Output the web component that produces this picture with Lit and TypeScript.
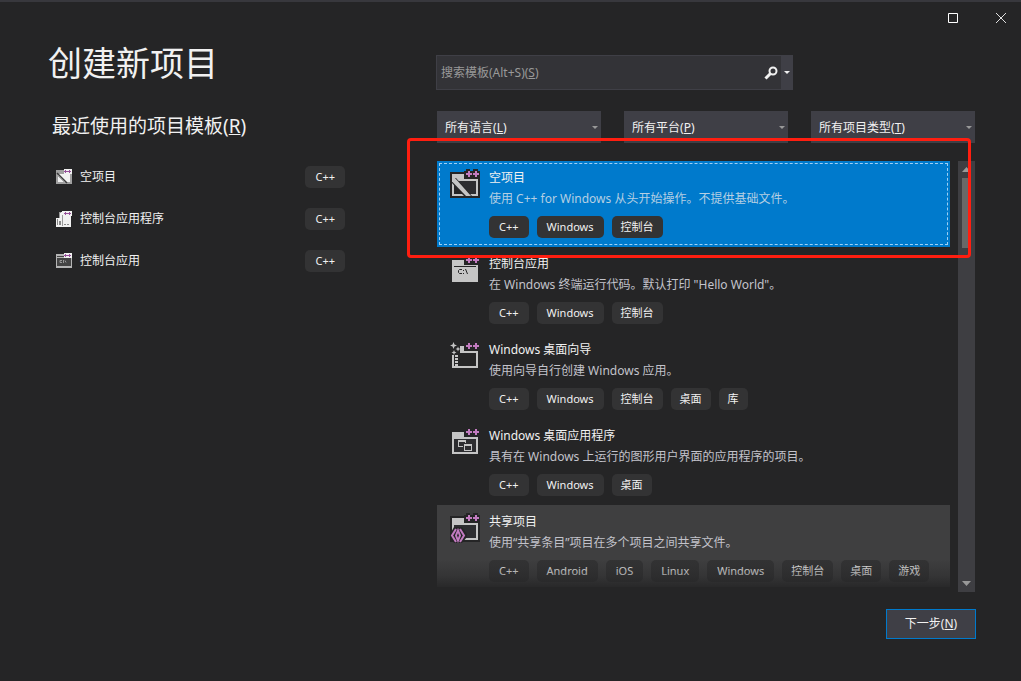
import { LitElement, html, css, svg, nothing } from "lit";
import { customElement, property } from "lit/decorators.js";
import { classMap } from "lit/directives/class-map.js";

interface Template {
  icon: string;
  title: string;
  text: string;
  tags: string[];
  state?: "selected" | "hover";
}

const RECENT = [
  { icon: "empty", title: "空项目", tag: "C++" },
  { icon: "program", title: "控制台应用程序", tag: "C++" },
  { icon: "console", title: "控制台应用", tag: "C++" },
];

const FILTERS = [
  { id: "language", label: "所有语言", key: "L", options: ["C++", "C#"] },
  { id: "platform", label: "所有平台", key: "P", options: ["Windows", "Linux", "Android", "iOS"] },
  { id: "type", label: "所有项目类型", key: "T", options: ["控制台", "桌面", "库", "游戏"] },
];

const TEMPLATES: Template[] = [
  {
    icon: "empty",
    title: "空项目",
    text: "使用 C++ for Windows 从头开始操作。不提供基础文件。",
    tags: ["C++", "Windows", "控制台"],
    state: "selected",
  },
  {
    icon: "console",
    title: "控制台应用",
    text: '在 Windows 终端运行代码。默认打印 "Hello World"。',
    tags: ["C++", "Windows", "控制台"],
  },
  {
    icon: "wizard",
    title: "Windows 桌面向导",
    text: "使用向导自行创建 Windows 应用。",
    tags: ["C++", "Windows", "控制台", "桌面", "库"],
  },
  {
    icon: "desktop",
    title: "Windows 桌面应用程序",
    text: "具有在 Windows 上运行的图形用户界面的应用程序的项目。",
    tags: ["C++", "Windows", "桌面"],
  },
  {
    icon: "shared",
    title: "共享项目",
    text: "使用“共享条目”项目在多个项目之间共享文件。",
    tags: ["C++", "Android", "iOS", "Linux", "Windows", "控制台", "桌面", "游戏"],
    state: "hover",
  },
];

const plusPlus = svg`
  <path fill="#252526" d="M17 2h4v2h3v-2h5v2h2v8H15v-8h2z"/>
  <path fill="#c27bc0" d="M19 4h2v2h2v2h-2v2h-2v-2h-2v-2h2zM26 4h2v2h2v2h-2v2h-2v-2h-2v-2h2z"/>`;

const windowFrame = svg`
  <path fill="#252526" d="M1 5h30v26H1z"/>
  <path fill="#c5c5c5" d="M3 7h13v4h13v18H3z"/>
  <path fill="#2d2d30" d="M5 14h22v13H5z"/>`;

const LARGE: Record<string, unknown> = {
  empty: svg`${windowFrame}
    <path fill="#252526" d="M3 11h4l16 18H3z"/>
    <path fill="#c5c5c5" d="M3 12v-1h3l16 18h-5L3 14.500z"/>
    <path fill="#c5c5c5" d="M3 16l2 2.200V27h8l2 2H3z"/>
    ${plusPlus}`,
  console: svg`
    <path fill="#252526" d="M1 5h30v26H1z"/>
    <path fill="#c5c5c5" d="M3 7h13v4h13v18H3z"/>
    <path fill="#252526" d="M5 13h22v1H5z"/>
    <path fill="none" stroke="#252526" d="M13 16.500h-2.500l-1 1v2l1 1H13M14.500 17v1M14.500 20v1M16.500 16l2 5"/>
    ${plusPlus}`,
  wizard: svg`
    <path fill="#c5c5c5" d="M11 7h5v4h1v1h12v17H3v-2h24V14H11z"/>
    <path fill="#c5c5c5" d="M3 16h2v12H3zM6 16h3v2H6zM6 19h3v2H6zM6 22h3v2H6zM6 25h3v2H6z"/>
    <path fill="#c5c5c5" d="M4.500 3l1 2.500 2.500 1-2.500 1-1 2.500-1-2.500-2.500-1 2.500-1zM9 7.500l.7 1.800 1.800.7-1.800.7L9 12.500l-.7-1.800-1.800-.7 1.800-.7zM5 11l.7 1.800 1.800.7-1.800.7L5 16l-.7-1.800-1.800-.7 1.800-.7z"/>
    ${plusPlus}`,
  desktop: svg`${windowFrame}
    <path fill="#c5c5c5" fill-rule="evenodd" d="M9 15h8v7H9zM10 17v4h6v-4z"/>
    <path fill="#2d2d30" d="M14 18h10v8H14z"/>
    <path fill="#c5c5c5" fill-rule="evenodd" d="M15 19h8v7h-8zM16 21v4h6v-4z"/>
    ${plusPlus}`,
  shared: svg`${windowFrame}
    <path fill="#252526" d="M5 16h8l5 7v3l-5 6H5l-4-6v-3z"/>
    <path fill="none" stroke="#c27bc0" stroke-width="2" d="M7 18l-4 6.500L7 31M11 18l4 6.500-4 6.500"/>
    <path fill="none" stroke="#c27bc0" stroke-width="2" d="M9 19.500l-2 5 2 5 2-5z"/>
    ${plusPlus}`,
};

const smallPlus = svg`
  <path fill="#f1f1f1" d="M8 0h8v5H8z"/>
  <path fill="#96509a" d="M9 1h1v1h1v1h-1v1H9v-1H8v-1h1zM13 1h1v1h1v1h-1v1h-1v-1h-1v-1h1z"/>
  <path fill="#96509a" d="M8 2h7v1H8z"/>`;

const SMALL: Record<string, unknown> = {
  empty: svg`
    <path fill="#a0a0a0" d="M0 1h16v14H0z"/>
    <path fill="#f1f1f1" d="M2 5h12v8H2z"/>
    <path stroke="#3a3a3a" stroke-width="1.500" d="M1 4l10 10"/>
    <path stroke="#a8a8a8" d="M1 6l8 8"/>${smallPlus}`,
  program: svg`
    <path fill="#f1f1f1" d="M6 0h9v16H0V7h3V1h3z"/>
    <path fill="#999" d="M3 1h2v1H4v5H3z"/>
    <path fill="#888" d="M1 8h1v6H1zM3 10h2v4H3zM8 13h2v1H8zM11 13h2v1h-2z"/>
    <path fill="#999" d="M6 4h1v11H6z"/>${smallPlus}`,
  console: svg`
    <path fill="#b4b4b4" d="M0 1h16v14H0z"/>
    <path fill="#444" d="M1 3h14v1H1zM1 5h14v8H1z"/>
    <path fill="none" stroke="#999" d="M6 7.500H4v2h2M7.500 7v3M9 7.500l1 2"/>${smallPlus}`,
};

@customElement("project-tag")
class ProjectTag extends LitElement {
  @property() name = "";

  static styles = css`
    :host {
      display: block;
      flex: none;
    }
    .tag {
      padding: 0 9px;
      border-radius: 5px;
      background: #333334;
      color: #f1f1f1;
      font-size: 11px;
      line-height: 22px;
      white-space: nowrap;
    }
    .latin {
      padding: 0 10px;
    }
  `;
  render() {
    const latin = /^[\x20-\x7e]+$/.test(this.name);
    return html`<div class=${classMap({ tag: true, latin })}>${this.name}</div>`;
  }
}

@customElement("template-item")
class TemplateItem extends LitElement {
  @property({ attribute: false }) item!: Template;

  static styles = css`
    :host {
      display: block;
      flex: none;
    }
    .item {
      display: grid;
      grid-template-columns: 32px minmax(0, 1fr);
      column-gap: 8px;
      padding: 6px 12px 9px;
    }
    .item.selected {
      background: #007acc;
      outline: 1px dashed #9fd0f5;
      outline-offset: -3px;
    }
    .item.selected .text {
      color: #b5cfe3;
    }
    .item.hover {
      background: #3f3f40;
    }
    .icon {
      width: 32px;
      height: 32px;
    }
    .title,
    .text {
      margin: 0;
      font-size: 12px;
      font-weight: 400;
      line-height: 21px;
      white-space: nowrap;
    }
    .title {
      color: #f1f1f1;
    }
    .text {
      color: #c3c3cb;
    }
    .tags {
      display: flex;
      flex-wrap: wrap;
      gap: 2px 8px;
      margin-top: 7px;
    }
  `;
  render() {
    const { icon, title, text, tags, state } = this.item;
    return html`
      <div class=${classMap({ item: true, selected: state === "selected", hover: state === "hover" })}>
        <svg class="icon" viewBox="0 0 32 32" aria-hidden="true">${LARGE[icon]}</svg>
        <div>
          <h3 class="title">${title}</h3>
          <p class="text">${text}</p>
          <div class="tags">${tags.map((t) => html`<project-tag .name=${t}></project-tag>`)}</div>
        </div>
      </div>
    `;
  }
}

@customElement("app-root")
class AppRoot extends LitElement {
  static styles = css`
    :host {
      display: flex;
      flex-direction: column;
      box-sizing: border-box;
      height: 100vh;
      border-top: 2px solid #38383d;
      background: #252526;
      color: #f1f1f1;
      font: 12px/20px "Noto Sans", "Noto Sans CJK SC", sans-serif;
    }
    button,
    input,
    select {
      margin: 0;
      padding: 0;
      border: 0;
      border-radius: 0;
      background: none;
      color: inherit;
      font: inherit;
      appearance: none;
    }
    svg {
      display: block;
    }
    u {
      text-underline-offset: 1px;
    }
    .titlebar {
      display: flex;
      justify-content: flex-end;
      flex: none;
      height: 32px;
      margin-bottom: 1px;
    }
    .control {
      display: grid;
      place-items: center;
      width: 48px;
      height: 32px;
    }
    .titlebar .control:last-child {
      margin-right: -4px;
    }
    .body {
      display: grid;
      grid-template-columns: 297px minmax(0, 1fr);
      column-gap: 91px;
      flex: 1;
      min-height: 0;
      padding: 0 45px 42px 48px;
    }
    h1 {
      margin: 6px 0 0;
      font-size: 34px;
      font-weight: 400;
      line-height: 44px;
    }
    h2 {
      margin: 27px 0 0 4px;
      font-size: 19px;
      font-weight: 400;
      line-height: 28px;
    }
    .recent {
      margin: 16px 0 0;
      padding: 0 0 0 8px;
      list-style: none;
    }
    .recent button {
      display: flex;
      align-items: center;
      gap: 8px;
      width: 100%;
      height: 42px;
      text-align: left;
    }
    .recent .name {
      flex: 1;
    }
    .right {
      display: flex;
      flex-direction: column;
      min-height: 0;
      padding-top: 20px;
    }
    .search {
      display: grid;
      grid-template-columns: minmax(0, 1fr) 20px 11px;
      box-sizing: border-box;
      width: 100%;
      max-width: 357px;
      height: 35px;
      border: 1px solid #3f3f46;
      background: #333337;
      flex: none;
    }
    .search input,
    .search label {
      grid-area: 1 / 1;
      padding-left: 4px;
    }
    .search input {
      min-width: 0;
      outline: none;
    }
    .search label {
      align-self: center;
      color: #999;
      pointer-events: none;
    }
    .search input:not(:placeholder-shown) + label {
      visibility: hidden;
    }
    .search button {
      display: grid;
      place-items: center;
    }
    .search .more {
      background: #3f3f46;
    }
    .filters {
      display: grid;
      grid-template-columns: repeat(3, minmax(0, 1fr));
      gap: 23px;
      flex: none;
      margin: 21px 1px 0;
    }
    .filter {
      display: grid;
      align-items: center;
      height: 32px;
      background: #3f3f46;
    }
    .filter select,
    .filter label,
    .filter svg {
      grid-area: 1 / 1;
    }
    .filter select {
      width: 100%;
      height: 100%;
    }
    .filter label {
      padding: 2px 0 0 8px;
      pointer-events: none;
    }
    .filter svg {
      justify-self: end;
      margin-right: 3px;
      pointer-events: none;
    }
    .results {
      position: relative;
      display: grid;
      grid-template-columns: minmax(0, 1fr) 17px;
      column-gap: 8px;
      flex: 1;
      min-height: 0;
      margin: 18px 1px 17px;
    }
    .list {
      position: relative;
      display: flex;
      flex-direction: column;
      min-height: 0;
      margin-bottom: 5px;
      overflow: hidden;
    }
    .fade {
      position: absolute;
      right: 0;
      bottom: 0;
      left: 0;
      height: 28px;
      background: linear-gradient(#25252600, #25252666 60%, #252526dd);
      pointer-events: none;
    }
    .scrollbar {
      display: flex;
      flex-direction: column;
      align-items: center;
      background: #3e3e42;
    }
    .scrollbar button {
      display: grid;
      place-items: center;
      width: 17px;
      height: 17px;
    }
    .thumb {
      width: 9px;
      height: 70px;
      background: #686868;
    }
    .track {
      flex: 1;
    }
    .marker {
      position: absolute;
      top: -23px;
      right: 4px;
      left: -30px;
      box-sizing: border-box;
      height: 120px;
      border: 3px solid #ff1e10;
      border-radius: 4px;
      pointer-events: none;
    }
    .next {
      align-self: flex-end;
      flex: none;
      width: 90px;
      height: 30px;
      border: 1px solid #007acc;
      background: #3f3f46;
    }
  `;

  render() {
    return html`
      <header class="titlebar">
        <button class="control" aria-label="最大化">
          <svg width="10" height="10"><path fill="none" stroke="#fff" d="M.5.5h9v9h-9z" /></svg>
        </button>
        <button class="control" aria-label="关闭">
          <svg width="10" height="10"><path stroke="#e0e0e0" d="M0 0l10 10M10 0L0 10" /></svg>
        </button>
      </header>
      <main class="body">
        <section>
          <h1>创建新项目</h1>
          <h2>最近使用的项目模板(<u>R</u>)</h2>
          <ul class="recent">
            ${RECENT.map(
              (r) => html`<li>
                <button>
                  <svg width="16" height="16" aria-hidden="true">${SMALL[r.icon]}</svg>
                  <span class="name">${r.title}</span>
                  <project-tag .name=${r.tag}></project-tag>
                </button>
              </li>`
            )}
          </ul>
        </section>
        <section class="right">
          <div class="search">
            <input id="search" type="text" placeholder=" " />
            <label for="search">搜索模板(Alt+S)(<u>S</u>)</label>
            <button aria-label="搜索">
              <svg width="14" height="14">
                <circle cx="9" cy="5" r="3.500" fill="none" stroke="#f1f1f1" stroke-width="2" />
                <path stroke="#f1f1f1" stroke-width="3" d="M6.500 7.500L1.500 12.500" />
              </svg>
            </button>
            <button class="more" aria-label="搜索选项">
              <svg width="6" height="3"><path fill="#f1f1f1" d="M0 0h6L3 3z" /></svg>
            </button>
          </div>
          <div class="filters">
            ${FILTERS.map(
              (f) => html`<div class="filter">
                <select id=${f.id}>
                  <option value=""></option>
                  ${f.options.map((o) => html`<option>${o}</option>`)}
                </select>
                <label for=${f.id}>${f.label}(<u>${f.key}</u>)</label>
                <svg width="6" height="3"><path fill="#999" d="M0 0h6L3 3z" /></svg>
              </div>`
            )}
          </div>
          <div class="results">
            <div class="list" role="listbox" aria-label="模板">
              ${TEMPLATES.map(
                (t) => html`<template-item
                  role="option"
                  aria-selected=${t.state === "selected" ? "true" : nothing}
                  .item=${t}
                ></template-item>`
              )}
              <div class="fade"></div>
            </div>
            <div class="scrollbar">
              <button aria-label="向上滚动">
                <svg width="9" height="5"><path fill="#999" d="M0 5h9L4.500 0z" /></svg>
              </button>
              <div class="thumb"></div>
              <div class="track"></div>
              <button aria-label="向下滚动">
                <svg width="9" height="5"><path fill="#999" d="M0 0h9L4.500 5z" /></svg>
              </button>
            </div>
            <div class="marker"></div>
          </div>
          <button class="next">下一步(<u>N</u>)</button>
        </section>
      </main>
    `;
  }
}
